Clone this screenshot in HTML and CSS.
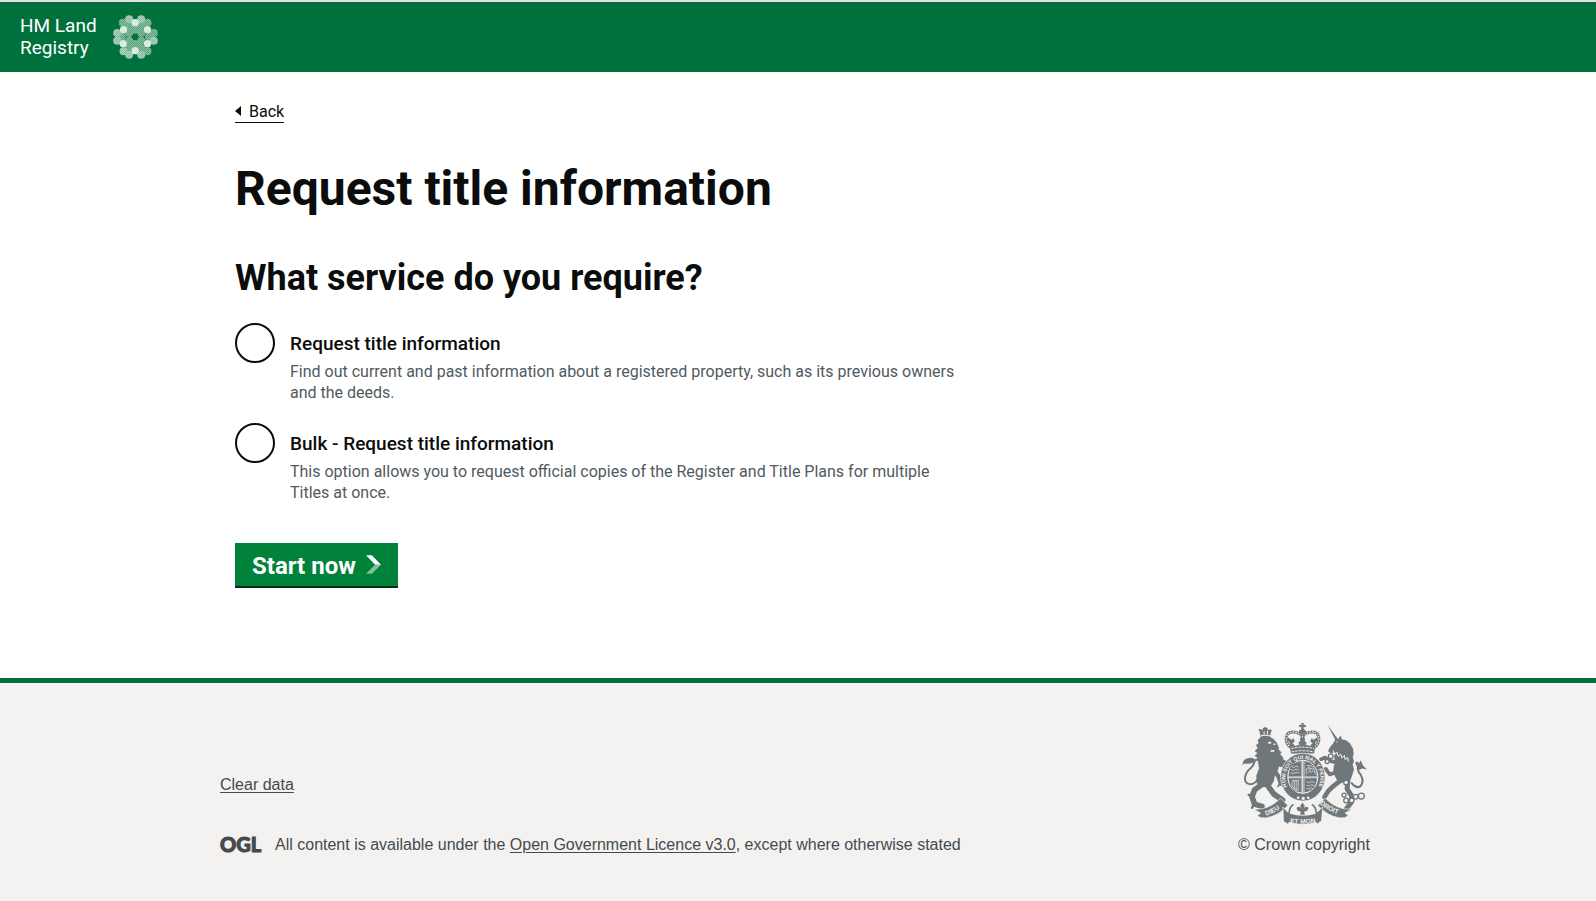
FILE: index.html
```html
<!DOCTYPE html>
<html lang="en">
<head>
<meta charset="utf-8">
<meta name="viewport" content="width=device-width, initial-scale=1">
<title>Request title information</title>
<link rel="stylesheet" href="styles.css">
</head>
<body>
<header class="header">
  <a class="brand" href="#">
    <span class="brand-name">HM Land<br>Registry</span>
    <svg class="brand-mark" viewBox="24 24 134 132" aria-hidden="true">
      <defs>
        <pattern id="mesh" width="6" height="6" patternUnits="userSpaceOnUse">
          <rect width="6" height="6" fill="#8cc0a2"/>
          <rect width="3" height="3" fill="#55a079"/><rect x="3" y="3" width="3" height="3" fill="#55a079"/>
        </pattern>
        <pattern id="mesh-light" width="6" height="6" patternUnits="userSpaceOnUse">
          <rect width="6" height="6" fill="#b5d7c4"/>
          <rect width="3" height="3" fill="#82b99b"/><rect x="3" y="3" width="3" height="3" fill="#82b99b"/>
        </pattern>
      </defs>
      <g fill="url(#mesh)">
        <circle cx="72" cy="57" r="12"/><circle cx="108" cy="57" r="12"/>
        <circle cx="50" cy="89" r="12"/><circle cx="131" cy="89" r="12"/>
        <circle cx="72" cy="122" r="12"/><circle cx="108" cy="122" r="12"/>
        <circle cx="72" cy="78" r="12"/><circle cx="108" cy="78" r="12"/>
        <circle cx="72" cy="101" r="12"/><circle cx="108" cy="101" r="12"/>
        <circle cx="90" cy="68" r="12"/><circle cx="90" cy="111" r="12"/>
        <circle cx="53" cy="47" r="12"/><circle cx="127" cy="47" r="12"/>
        <circle cx="146" cy="78" r="12"/><circle cx="127" cy="133" r="12"/>
      </g>
      <g fill="url(#mesh-light)">
        <circle cx="72" cy="37" r="12"/><circle cx="108" cy="37" r="12"/>
        <circle cx="36" cy="78" r="12"/><circle cx="36" cy="101" r="12"/>
        <circle cx="146" cy="101" r="12"/><circle cx="55" cy="133" r="12"/>
        <circle cx="72" cy="143" r="12"/><circle cx="108" cy="143" r="12"/>
      </g>
      <g fill="#d8ebe0">
        <circle cx="90" cy="47" r="11"/><circle cx="55" cy="68" r="11"/><circle cx="127" cy="68" r="11"/>
        <circle cx="54" cy="110" r="11"/><circle cx="127" cy="110" r="11"/><circle cx="90" cy="131" r="11"/>
      </g>
      <circle cx="90" cy="89" r="9" fill="#00703c"/>
    </svg>
  </a>
</header>

<main class="main container">
  <a class="back" href="#">Back</a>
  <h1 class="title">Request title information</h1>
  <form class="form">
    <fieldset class="choices">
      <legend class="question">What service do you require?</legend>
      <div class="choice">
        <input class="radio" type="radio" name="service" id="single" aria-describedby="single-hint">
        <div class="choice-text">
          <label class="choice-label" for="single">Request title information</label>
          <p class="hint" id="single-hint">Find out current and past information about a registered property, such as its previous owners and the deeds.</p>
        </div>
      </div>
      <div class="choice">
        <input class="radio" type="radio" name="service" id="bulk" aria-describedby="bulk-hint">
        <div class="choice-text">
          <label class="choice-label" for="bulk">Bulk - Request title information</label>
          <p class="hint" id="bulk-hint">This option allows you to request official copies of the Register and Title Plans for multiple Titles at once.</p>
        </div>
      </div>
    </fieldset>
    <button class="start" type="button">Start now
      <svg class="start-icon" viewBox="0 0 46 57" aria-hidden="true"><path d="M0 0H18L46 29H28Z" fill="#fff"/><path d="M28 29H46L18 57H0Z" fill="#80c29b"/></svg>
    </button>
  </form>
</main>

<footer class="footer">
  <div class="footer-inner container">
    <div class="footer-meta">
      <a class="footer-link" href="#">Clear data</a>
      <div class="licence">
        <svg class="ogl" viewBox="0 0 42 18" role="img" aria-label="Open Government Licence"><text x="0" y="16">OGL</text></svg>
        <span>All content is available under the <a class="footer-link" href="#">Open Government Licence v3.0</a>, except where otherwise stated</span>
      </div>
    </div>
    <a class="copyright" href="#">
      <svg class="crest" viewBox="36 22 376 308" aria-hidden="true">
        <!-- lion -->
        <g fill="#6f777b">
          <path d="M92 66L89 50l-4-6 7-2 5 4 2-7 7-3 7 4 1 7 6-4 6 3-4 8-1 12q12 5 19 16l7 16-1 5 9 10-4 4 10 12-4 5 9 9-2 8 7 5-8 3-16-4-3 12-9 14-3 18-8 12-22 6-22-12-1-22 8-22-3-22-8-3 7-7-9-6 8-9-8-6 9-9-5-9 8-6-3-8Z"/>
          <path d="M38 152q-2-20 18-23 14-1 18 4l10-3q-6 12-20 15-12 3-22 1Z"/>
        </g>
        <g fill="none" stroke="#6f777b" stroke-linejoin="round" stroke-linecap="round">
          <path d="M86 190q-10 19-27 18-15-3-14-19 2-17 16-28 11-9 13-22" stroke-width="6"/>
          <path d="M140 130L166 144M128 160L146 186 153 207" stroke-width="13"/>
          <path d="M100 206L74 225 66 246 74 268 96 275" stroke-width="17"/>
          <path d="M66 243L56 240M72 270L66 279" stroke-width="7"/>
          <path d="M114 213L132 238 158 256" stroke-width="17"/>
          <path d="M150 207L144 215M158 208L160 217" stroke-width="5"/>
        </g>
        <g fill="#f3f2f1">
          <path d="M113 83l8-3 4 5-7 2Zm17 5l5-3 3 3-6 3Zm-8 18l12-1-3 7-4-2-5 2Z"/>
          <path d="M101 49h3v8h-3Zm10-1h3v9h-3ZM91 62q14-6 31 0l-1 3q-14-5-29 0Z"/>
        </g>
        <!-- unicorn -->
        <g fill="#6f777b">
          <path d="M293 29l32 44 8-12 3 12 13 3 12 10 9 15 2 16-3 9 4 13-4 10 4 14-5 17-4 12-10 8-18 4-14-8-12-22 2-20 5-12-4-15 3-15-13 3-8-6 4-10 13-16 4-9Z"/>
          <path d="M376 144l8-5 4 7 5-10 7 16 12 12-15-3-10 5Z"/>
        </g>
        <g fill="none" stroke="#6f777b" stroke-linejoin="round" stroke-linecap="round">
          <path d="M366 205q14 18 27 9 11-15 0-34-12-14-8-26" stroke-width="6"/>
          <path d="M328 145L302 138 286 128 274 133" stroke-width="11"/>
          <path d="M325 170L300 179 288 162" stroke-width="11"/>
          <path d="M334 196L308 216 296 228 284 247" stroke-width="14"/>
          <path d="M355 192L352 222 366 244 364 264 350 282" stroke-width="15"/>
        </g>
        <path d="M317 81l7-2-2 4Z" fill="#f3f2f1"/>
        <path d="M310 107l5 11 7-6 3 12 8-6 3 11 8-7 2 12 8-6 2 12" fill="none" stroke="#f3f2f1" stroke-width="3"/>
        <g fill="#f3f2f1" stroke="#6f777b" stroke-width="4">
          <circle cx="303" cy="124" r="7"/><circle cx="292" cy="140" r="6"/><circle cx="349" cy="203" r="7"/>
          <circle cx="343" cy="241" r="6"/><circle cx="349" cy="257" r="7"/><circle cx="366" cy="257" r="7"/><circle cx="378" cy="246" r="7"/><circle cx="395" cy="244" r="9"/>
        </g>
        <!-- ribbons -->
        <g fill="#6f777b" stroke="#f3f2f1" stroke-width="2">
          <path d="M72 284l24-2q30-5 56-32l22 22q-30 32-64 37-18 3-28-6l10-8Z"/>
          <path d="M366 284l-24-2q-30-5-56-32l-22 22q30 32 64 37 18 3 28-6l-10-8Z"/>
          <path d="M159 277l13 14q46 18 93-1l14-14-4 42-13 10-3-5q-37 12-82 0l-2 6-14-9Z"/>
        </g>
        <!-- crown -->
        <g fill="none" stroke="#6f777b">
          <path d="M184 99C162 82 164 50 190 51q18 1 28 12 10-11 28-12c26-1 28 31 6 48" stroke-width="9"/>
          <path d="M184 99C162 82 164 50 190 51q18 1 28 12 10-11 28-12c26-1 28 31 6 48" stroke="#f3f2f1" stroke-width="4" stroke-dasharray="4 4"/>
          <path d="M218 55v34" stroke-width="12"/>
          <path d="M218 55v34" stroke="#f3f2f1" stroke-width="3" stroke-dasharray="4 4"/>
        </g>
        <g fill="#6f777b">
          <path d="M214 24h8l-1 6 7-1v8l-7-1 1 7q7 2 7 8t-11 7q-11-1-11-7t7-8l1-7-7 1v-8l7 1Z"/>
          <path d="M180 96l-1-15-8-3 5-10 9 7 5-6 5 10-7 6 8 8 13-4-4-7 7-3-2-8h16l-2 8 7 3-4 7 13 4 8-8-7-6 5-10 5 6 9-7 5 10-8 3-1 15-3 20H183Z"/>
        </g>
        <path d="M184 101q34-9 69 0M185 111q33-7 67 0" fill="none" stroke="#f3f2f1" stroke-width="3" stroke-dasharray="8 3"/>
        <!-- garter and shield -->
        <ellipse cx="219" cy="187" rx="67" ry="72" fill="#6f777b" stroke="#f3f2f1" stroke-width="2"/>
        <ellipse cx="219" cy="186" rx="45" ry="50" fill="#a8adae" stroke="#f3f2f1" stroke-width="3"/>
        <path id="garter" d="M180 228A53 57 0 1 1 258 228" fill="none"/>
        <text class="motto"><textPath href="#garter" startOffset="50%" text-anchor="middle">HONI SOIT QUI MAL Y PENSE</textPath></text>
        <path d="M184 153q11-12 29-14v45h-36q0-18 7-31ZM225 139q20 3 29 17 6 11 7 28h-36ZM177 191h36v41q-18-2-28-15-7-9-8-26ZM225 191h36q-1 16-9 28-10 11-27 13Z" fill="#6f777b"/>
        <path d="M218 137v97M175 187h88M185 155l8 3 5-5 8 4M183 164l9 3 6-4 9 3M182 174l10 2 7-4 9 3M231 152l16 1 6 8M229 179v-17h23l5 17M234 175l6-8 4 6 7-5M234 157l10 4M187 199v16q7 9 19 12M193 197v26M199 197v29M205 197v30M187 197h20M230 201l9 3 6-4 10 3M230 211l9 3 6-4 9 3M230 221l8 2 6-4 5 2" fill="none" stroke="#f3f2f1" stroke-width="2"/>
        <g fill="#f3f2f1"><circle cx="205" cy="249" r="4"/><circle cx="220" cy="251" r="5"/><circle cx="235" cy="249" r="4"/></g>
        <!-- fleur -->
        <path d="M180 297V275q20-14 38-14t40 14v22q-38 12-78 0Z" fill="#f3f2f1"/>
        <path d="M218 263l7 11-4 9q5-9 12-6 6 5-2 12l-8 2 2 9h-14l2-9-8-2q-8-7-2-12 7-3 12 6l-4-9Z" fill="#6f777b"/>
        <path d="M178 296q-1-18 13-27M259 296q1-18-13-27" fill="none" stroke="#6f777b" stroke-width="5"/>
        <path id="scroll-left" d="M108 303Q137 295 172 263" fill="none"/>
        <path id="scroll-mid" d="M170 323Q219 332 268 322" fill="none"/>
        <path id="scroll-right" d="M270 267Q300 295 346 304" fill="none"/>
        <text class="scroll"><textPath href="#scroll-left">DIEU</textPath></text>
        <text class="scroll"><textPath href="#scroll-mid" startOffset="50%" text-anchor="middle">ET MON</textPath></text>
        <text class="scroll"><textPath href="#scroll-right">DROIT</textPath></text>
      </svg>
      <span>© Crown copyright</span>
    </a>
  </div>
</footer>
</body>
</html>
```
FILE: styles.css
```css
*, *::before, *::after { box-sizing: border-box; }
html { min-height: 100%; background: #f3f2f1; }
body {
  margin: 0;
  background: #fff;
  color: #0b0c0c;
  font: 16px/21px Roboto, "Liberation Sans", sans-serif;
}
.container { max-width: 1156px; margin: 0 auto; }

.header {
  display: flex;
  padding: 13px 20px;
  border-top: 2px solid #dee0e2;
  background: #00703c;
}
.brand { display: flex; align-items: center; gap: 16px; color: #fff; text-decoration: none; }
.brand-name { font: 400 19px/22px Roboto, sans-serif; }
.brand-mark { width: 45px; height: 44px; }

.main { padding: 28px 15px 90px; }
.back {
  display: inline-flex;
  align-items: center;
  gap: 8px;
  border-bottom: 1px solid #0b0c0c;
  color: #0b0c0c;
  text-decoration: none;
}
.back::before {
  content: "";
  border: solid transparent;
  border-width: 5px 6px 5px 0;
  border-right-color: #0b0c0c;
}
.title { margin: 38px 0 0; font-size: 48px; line-height: 56px; font-weight: 700; }
.form { max-width: 728px; margin-top: 39px; }
.choices { margin: 0; padding: 0; border: 0; min-width: 0; }
.question { padding: 0; margin-bottom: 23px; font-size: 36px; line-height: 44px; font-weight: 700; }
.choice { display: flex; gap: 15px; margin-bottom: 20px; }
.radio {
  flex: none;
  appearance: none;
  width: 40px;
  height: 40px;
  margin: 0;
  border: 2px solid #0b0c0c;
  border-radius: 50%;
  background: #fff;
}
.radio:checked { background: radial-gradient(#0b0c0c 10px, #fff 11px); }
.choice-label { display: block; padding: 9px 0 5px; font-size: 19px; line-height: 24px; font-weight: 500; }
.hint { margin: 0; color: #505a5f; }
.start {
  display: inline-flex;
  align-items: center;
  gap: 10px;
  margin: 20px 0 2px;
  padding: 9px 17px 6px;
  border: 0;
  background: #00823b;
  box-shadow: 0 2px 0 #002d18;
  color: #fff;
  font: 700 24px/28px Roboto, sans-serif;
}
.start-icon { width: 15px; height: 19px; margin-bottom: 2px; }

.footer {
  border-top: 5px solid #00703c;
  background: #f3f2f1;
  color: #454a4d;
  font: 16px/20px "Liberation Sans", Arial, sans-serif;
}
.footer-inner { display: flex; justify-content: space-between; align-items: flex-end; padding: 39px 0 46px; }
.footer-meta { display: grid; gap: 40px; }
.footer-link { justify-self: start; color: inherit; text-underline-offset: 2px; }
.licence { display: flex; align-items: center; gap: 13px; }
.ogl { width: 42px; height: 18px; overflow: visible; }
.ogl text { font: 900 20px Lato, sans-serif; fill: #454a4d; stroke: #454a4d; stroke-width: 1px; }
.copyright {
  display: flex;
  flex-direction: column;
  align-items: center;
  gap: 10px;
  width: 144px;
  color: inherit;
  text-decoration: none;
}
.crest { width: 125px; height: 103px; }
.motto { font: 700 16px "Liberation Sans", sans-serif; fill: #f3f2f1; }
.scroll { font: 700 20px "Liberation Sans", sans-serif; fill: #f3f2f1; }
```
